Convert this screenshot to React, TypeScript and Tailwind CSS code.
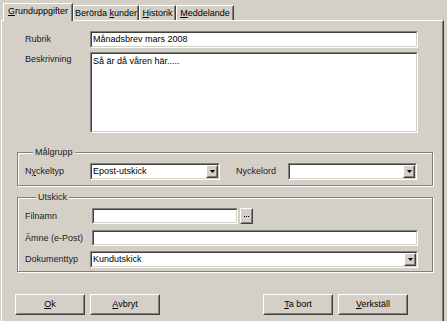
import React from "react";

const BG = "bg-[#d4d0c8]";

function Sunken({ className = "", children }: { className?: string; children?: React.ReactNode }) {
  return (
    <div className={`border border-t-[#808080] border-l-[#808080] border-r-white border-b-white ${className}`}>
      <div className="h-full w-full border border-t-[#404040] border-l-[#404040] border-r-[#d4d0c8] border-b-[#d4d0c8] bg-white flex">
        {children}
      </div>
    </div>
  );
}

function Raised({ className = "", children }: { className?: string; children?: React.ReactNode }) {
  return (
    <div className={`border border-t-white border-l-white border-r-[#404040] border-b-[#404040] ${className}`}>
      <div className={`h-full w-full border border-t-[#d4d0c8] border-l-[#d4d0c8] border-r-[#808080] border-b-[#808080] ${BG} flex items-center justify-center`}>
        {children}
      </div>
    </div>
  );
}

function Select({ className = "", value = "" }: { className?: string; value?: string }) {
  return (
    <Sunken className={className}>
      <div className="flex-1 flex items-center pl-[1px] text-black">{value}</div>
      <Raised className="w-[12px] h-full">
        <svg width="5" height="3" viewBox="0 0 5 3">
          <path d="M0 0h5L2.5 3z" fill="#000" />
        </svg>
      </Raised>
    </Sunken>
  );
}

function Label({ w, children }: { w: string; children: React.ReactNode }) {
  return <div className={`${w} shrink-0 flex items-center text-[#1a1a1a]`}>{children}</div>;
}

function Button({ className = "", children }: { className?: string; children: React.ReactNode }) {
  return <Raised className={`w-[70px] h-[21px] ${className}`}><span className="text-black">{children}</span></Raised>;
}

export default function App() {
  return (
    <div
      className={`w-[447px] h-[321px] overflow-hidden ${BG} flex flex-col text-[9px] leading-none`}
      style={{ fontFamily: '"Liberation Sans", Arial, sans-serif' }}
    >
      {/* Tabs */}
      <div className="h-[20px] flex items-end pl-[3px] shrink-0">
        <div className={`relative z-10 -mb-[1px] h-[18px] w-[70px] ${BG} border-t border-l border-white border-r border-r-[#404040] shadow-[inset_-1px_0_0_#808080] flex items-center justify-center pb-[2px] text-black`}>
          <span><span className="underline">G</span>runduppgifter</span>
        </div>
        <div className="h-[15px] w-[66px] border-t border-l border-white border-r border-r-[#404040] shadow-[inset_-1px_0_0_#808080] flex items-center justify-center text-black">
          <span>Berörda <span className="underline">k</span>under</span>
        </div>
        <div className="h-[15px] w-[37px] border-t border-l border-white border-r border-r-[#404040] shadow-[inset_-1px_0_0_#808080] flex items-center justify-center text-black">
          <span><span className="underline">H</span>istorik</span>
        </div>
        <div className="h-[15px] w-[58px] border-t border-l border-white border-r border-r-[#404040] shadow-[inset_-1px_0_0_#808080] flex items-center justify-center text-black">
          <span><span className="underline">M</span>eddelande</span>
        </div>
      </div>

      {/* Panel */}
      <div className="ml-[1px] w-[443px] flex-1 border-t border-l border-white border-r border-r-[#404040] shadow-[inset_-1px_0_0_#808080] flex flex-col">
        {/* Rubrik */}
        <div className="mt-[10px] flex h-[17px] pl-[23px]">
          <Label w="w-[65px]">Rubrik</Label>
          <Sunken className="w-[328px] h-[17px]">
            <div className="flex items-center pl-[1px] text-black">Månadsbrev mars 2008</div>
          </Sunken>
        </div>
        {/* Beskrivning */}
        <div className="mt-[4px] flex pl-[23px]">
          <div className="w-[65px] shrink-0 pt-[3px] text-[#1a1a1a]">Beskrivning</div>
          <Sunken className="w-[328px] h-[81px]">
            <div className="pl-[1px] pt-[3px] text-black">Så är då våren här.....</div>
          </Sunken>
        </div>

        {/* Målgrupp */}
        <div className="relative mt-[19px] ml-[15px] w-[416px] h-[34px] border border-[#808080] shadow-[inset_1px_1px_0_#fff,1px_1px_0_#fff] pt-[10px] pl-[7px] flex">
          <div className={`absolute left-[15px] -top-[5px] px-[2px] ${BG} text-[#1a1a1a]`}>Målgrupp</div>
          <Label w="w-[65px] h-[17px]"><span>N<span className="underline">y</span>ckeltyp</span></Label>
          <Select className="w-[130px] h-[17px]" value="Epost-utskick" />
          <Label w="ml-[16px] w-[52px] h-[17px]">Nyckelord</Label>
          <Select className="w-[129px] h-[17px]" />
        </div>

        {/* Utskick */}
        <div className="relative mt-[11px] ml-[15px] w-[416px] h-[75px] border border-[#808080] shadow-[inset_1px_1px_0_#fff,1px_1px_0_#fff] pt-[10px] pl-[7px] flex flex-col">
          <div className={`absolute left-[18px] -top-[5px] px-[2px] ${BG} text-[#1a1a1a]`}>Utskick</div>
          <div className="flex h-[16px]">
            <Label w="w-[67px] h-[16px]">Filnamn</Label>
            <Sunken className="w-[146px] h-[16px]" />
            <Raised className="ml-[2px] w-[13px] h-[16px]">
              <svg width="5" height="1" viewBox="0 0 5 1">
                <rect x="0" y="0" width="1" height="1" fill="#000" />
                <rect x="2" y="0" width="1" height="1" fill="#000" />
                <rect x="4" y="0" width="1" height="1" fill="#000" />
              </svg>
            </Raised>
          </div>
          <div className="mt-[6px] flex h-[16px]">
            <Label w="w-[67px] h-[16px]">Ämne (e-Post)</Label>
            <Sunken className="w-[326px] h-[16px]" />
          </div>
          <div className="mt-[5px] flex h-[17px]">
            <Label w="w-[65px] h-[17px]">Dokumenttyp</Label>
            <Select className="w-[328px] h-[17px]" value="Kundutskick" />
          </div>
        </div>

        {/* Buttons */}
        <div className="mt-[22px] flex">
          <Button className="ml-[13px]"><span className="underline">O</span>k</Button>
          <Button className="ml-[5px]"><span className="underline">A</span>vbryt</Button>
          <Button className="ml-[103px]"><span className="underline">T</span>a bort</Button>
          <Button className="ml-[5px]"><span className="underline">V</span>erkställ</Button>
        </div>
      </div>
    </div>
  );
}
